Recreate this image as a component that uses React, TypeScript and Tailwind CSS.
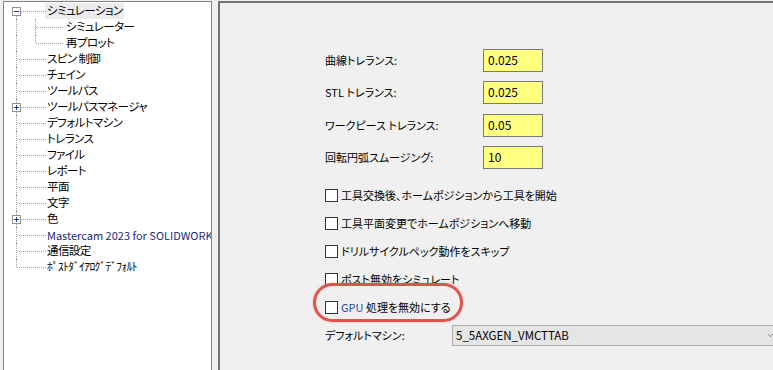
import { ChevronDown } from "lucide-react";

interface TreeRow {
  label: string;
  level: number;
  box?: "-" | "+";
  highlight?: boolean;
  color?: string;
  first?: boolean;
  last?: boolean;
  lastChild?: boolean;
}

const rows: TreeRow[] = [
  { label: "シミュレーション", level: 0, box: "-", highlight: true, first: true },
  { label: "シミュレーター", level: 1 },
  { label: "再プロット", level: 1, lastChild: true },
  { label: "スピン 制御", level: 0 },
  { label: "チェイン", level: 0 },
  { label: "ツールパス", level: 0 },
  { label: "ツールパスマネージャ", level: 0, box: "+" },
  { label: "デフォルトマシン", level: 0 },
  { label: "トレランス", level: 0 },
  { label: "ファイル", level: 0 },
  { label: "レポート", level: 0 },
  { label: "平面", level: 0 },
  { label: "文字", level: 0 },
  { label: "色", level: 0, box: "+" },
  { label: "Mastercam 2023 for SOLIDWORKS", level: 0, color: "text-[#1e2a78] text-[11px] tracking-normal" },
  { label: "通信設定", level: 0 },
  { label: "ﾎﾟｽﾄﾀﾞｲｱﾛｸﾞﾃﾞﾌｫﾙﾄ", level: 0, last: true },
];

const fields = [
  { label: "曲線トレランス:", value: "0.025", mt: "mt-0" },
  { label: "STL トレランス:", value: "0.025", mt: "mt-[9px]" },
  { label: "ワークピース トレランス:", value: "0.05", mt: "mt-[10px]" },
  { label: "回転円弧スムージング:", value: "10", mt: "mt-[9px]" },
];

const checks = [
  "工具交換後、ホームポジションから工具を開始",
  "工具平面変更でホームポジションへ移動",
  "ドリルサイクルペック動作をスキップ",
  "ポスト無効をシミュレート",
];

const dot = "border-dotted border-[#a0a0a0]";

const TreeLine = ({ row }: { row: TreeRow }) => {
  const trunkClass = row.first
    ? "top-[12px] bottom-0"
    : row.last
    ? "top-0 h-[8px]"
    : "top-0 bottom-0";
  return (
    <div className={`relative h-4 shrink-0 ${row.level === 0 ? "w-[41px]" : "w-[60px]"}`}>
      <div className={`absolute left-[12px] w-0 border-l ${dot} ${trunkClass}`} />
      {row.level === 0 ? (
        <div className={`absolute left-[13px] top-[8px] w-[29px] h-0 border-t ${dot}`} />
      ) : (
        <>
          <div
            className={`absolute left-[31px] w-0 border-l ${dot} ${
              row.lastChild ? "top-0 h-[8px]" : "top-0 bottom-0"
            }`}
          />
          <div className={`absolute left-[32px] top-[8px] w-[27px] h-0 border-t ${dot}`} />
        </>
      )}
      {row.box && (
        <div className="absolute left-[8px] top-[4px] w-[9px] h-[9px] border border-[#919191] bg-white flex items-center justify-center">
          <div className="relative w-[5px] h-[5px]">
            <div className="absolute left-0 top-[2px] w-[5px] h-[1px] bg-[#1f3f99]" />
            {row.box === "+" && (
              <div className="absolute left-[2px] top-0 w-[1px] h-[5px] bg-[#1f3f99]" />
            )}
          </div>
        </div>
      )}
    </div>
  );
};

export default function App() {
  return (
    <div
      className="w-[773px] h-[370px] bg-[#f0f0f0] overflow-hidden flex text-[11px] text-black [font-feature-settings:'palt']"
      style={{ fontFamily: '"Noto Sans CJK JP", "Noto Sans", sans-serif' }}
    >
      {/* tree */}
      <div className="ml-[3px] mt-[1px] w-[209px] h-[380px] shrink-0 border border-[#828282] bg-white overflow-hidden pt-[1px] text-[11.5px] tracking-[-0.6px]">
        {rows.map((row, i) => (
          <div key={i} className="flex h-4 items-center whitespace-nowrap">
            <TreeLine row={row} />
            <span
              className={`h-4 px-[2px] flex items-center leading-none ${
                row.highlight ? "bg-[#ececec]" : ""
              } ${row.color ?? ""}`}
            >
              {row.label}
            </span>
          </div>
        ))}
      </div>

      {/* settings */}
      <div className="ml-[6px] mt-[1px] flex-1 h-[380px] border-l-2 border-t-2 border-[#727272] overflow-hidden">
        <div className="flex flex-col pt-[46px] pl-[105px]">
          {fields.map((f, i) => (
            <div key={i} className={`flex items-center h-[23px] ${f.mt}`}>
              <div className="w-[158px] shrink-0">{f.label}</div>
              <div className="w-[60px] h-[23px] border border-[#7a7a7a] bg-[#ffff80] flex items-center pl-[4px] pb-[2px] text-[12px]">
                {f.value}
              </div>
            </div>
          ))}

          <div className="mt-[12px] flex flex-col">
            {checks.map((c, i) => (
              <div key={i} className="flex items-center h-[28px] whitespace-nowrap">
                <div className="w-[13px] h-[13px] border border-[#333333] bg-white shrink-0" />
                <span className="ml-[3px]">{c}</span>
              </div>
            ))}
            <div className="relative flex items-center h-[28px] whitespace-nowrap">
              <div className="w-[13px] h-[13px] border border-[#333333] bg-white shrink-0" />
              <span className="ml-[3px]">
                <span className="text-[#2447a8]">GPU</span> 処理を無効にする
              </span>
              <div className="absolute left-[-12px] top-[-10px] w-[150px] h-[39px] rounded-full border-[3px] border-[#e0524c] shadow-[0_0_2px_rgba(224,82,76,0.5)]" />
            </div>
          </div>

          <div className="mt-[4px] flex items-center h-[21px] whitespace-nowrap">
            <div className="w-[127px] shrink-0">デフォルトマシン:</div>
            <div className="w-[340px] h-[21px] shrink-0 border border-[#adadad] bg-[#e5e5e5] flex items-center pl-[3px] pr-[16px] justify-between">
              <span className="text-[11.5px]">5_5AXGEN_VMCTTAB</span>
              <ChevronDown className="w-[9px] h-[9px] text-[#555]" strokeWidth={2} />
            </div>
          </div>
        </div>
      </div>
    </div>
  );
}
